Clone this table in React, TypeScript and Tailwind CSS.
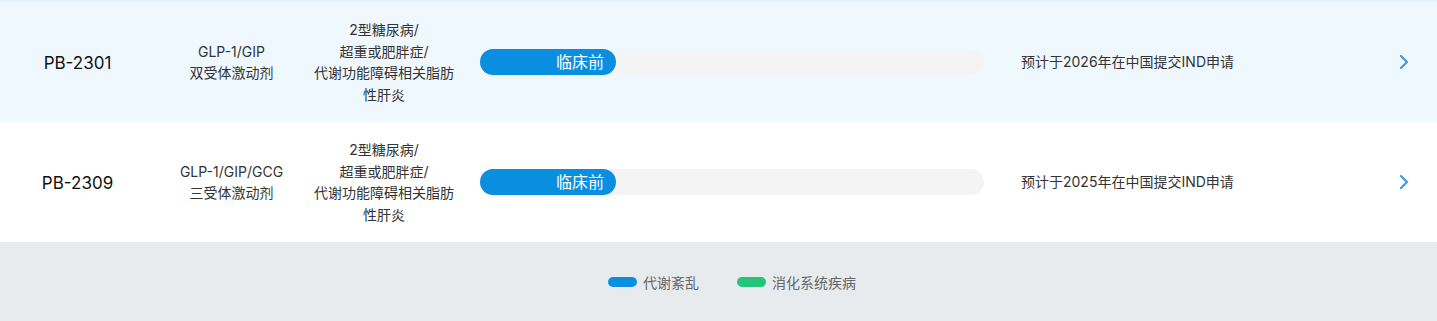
import { ChevronRight } from 'lucide-react';

type Pipeline = {
  code: string;
  target: string[];
  indication: string[];
  stage: string;
  progress: number;
  milestone: string;
  highlight: boolean;
};

const rows: Pipeline[] = [
  {
    code: 'PB-2301',
    target: ['GLP-1/GIP', '双受体激动剂'],
    indication: ['2型糖尿病/', '超重或肥胖症/', '代谢功能障碍相关脂肪', '性肝炎'],
    stage: '临床前',
    progress: 136,
    milestone: '预计于2026年在中国提交IND申请',
    highlight: true,
  },
  {
    code: 'PB-2309',
    target: ['GLP-1/GIP/GCG', '三受体激动剂'],
    indication: ['2型糖尿病/', '超重或肥胖症/', '代谢功能障碍相关脂肪', '性肝炎'],
    stage: '临床前',
    progress: 136,
    milestone: '预计于2025年在中国提交IND申请',
    highlight: false,
  },
];

const font = { fontFamily: 'Inter, "Noto Sans CJK SC", "Noto Sans", sans-serif' };

const PipelineRow = ({ row }: { row: Pipeline }) => (
  <div className={`flex h-[120px] items-center ${row.highlight ? 'bg-[#f0f8ff]' : 'bg-white'}`}>
    <div className="w-[155px] pt-[4px] text-center text-[17px] text-[#111]">{row.code}</div>
    <div className="w-[153px] text-center text-[14px] leading-[21.5px] text-[#333]">
      {row.target.map((t) => (
        <div key={t}>{t}</div>
      ))}
    </div>
    <div className="w-[152px] text-center text-[14px] leading-[21.5px] text-[#333]">
      {row.indication.map((t) => (
        <div key={t}>{t}</div>
      ))}
    </div>
    <div className="ml-[20px] h-[26px] w-[504px] rounded-full bg-[#f4f4f4]">
      <div
        className="flex h-full items-center justify-end rounded-full bg-[#0a8fe0] pr-[12px] text-[16px] text-white"
        style={{ width: row.progress }}
      >
        {row.stage}
      </div>
    </div>
    <div className="ml-[37px] flex-1 pb-[2px] text-[14px] text-[#333]">{row.milestone}</div>
    <ChevronRight className="mr-[21px] h-[24px] w-[24px] text-[#3a9be0]" strokeWidth={2.2} />
  </div>
);

export default function App() {
  return (
    <div className="w-[1437px]" style={font}>
      <div className="h-[2px] bg-[#e4f2fd]" />
      {rows.map((row) => (
        <PipelineRow key={row.code} row={row} />
      ))}
      <div className="flex h-[80px] items-center justify-center gap-[38px] bg-[#e8ebee] pl-[27px] text-[14px] text-[#666]">
        <div className="flex items-center gap-[6px]">
          <span className="h-[10px] w-[29px] rounded-full bg-[#0a8fe0]" />
          代谢紊乱
        </div>
        <div className="flex items-center gap-[6px]">
          <span className="h-[10px] w-[29px] rounded-full bg-[#22c57a]" />
          消化系统疾病
        </div>
      </div>
    </div>
  );
}
